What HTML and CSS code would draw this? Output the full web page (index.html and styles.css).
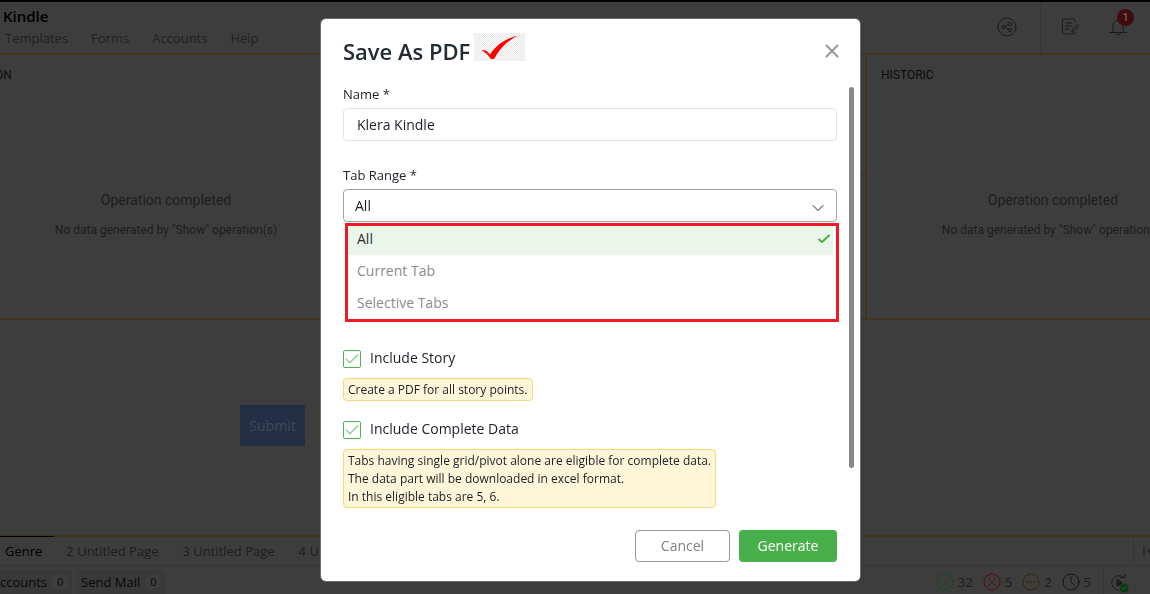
FILE: index.html
```
<!DOCTYPE html>
<html lang="en">
<head>
<meta charset="utf-8">
<title>Kindle</title>
<link rel="stylesheet" href="styles.css">
</head>
<body>
<div class="app">
  <header class="topbar">
    <div class="brand">
      <h1 class="app-name">Kindle</h1>
      <nav class="menu">
        <a href="#">Templates</a><a href="#">Forms</a><a href="#">Accounts</a><a href="#">Help</a>
      </nav>
    </div>
    <div class="tools">
      <button class="tool share" aria-label="Share">
        <svg width="20" height="20" viewBox="0 0 20 20"><circle cx="10" cy="10" r="9"/><circle cx="6.800" cy="10" r="1.700"/><circle cx="12.800" cy="7" r="1.700"/><circle cx="12.800" cy="13" r="1.700"/><path d="M8.400 9.300l2.800-1.500M8.400 10.700l2.800 1.500"/></svg>
      </button>
      <div class="tool-pair">
        <button class="tool" aria-label="Edit notes">
          <svg width="20" height="20" viewBox="0 0 20 20"><path d="M15 5V3.500A1.500 1.500 0 0 0 13.500 2H4A1.500 1.500 0 0 0 2.500 3.500v12A1.500 1.500 0 0 0 4 17h9.500a1.500 1.500 0 0 0 1.500-1.500M5.500 6h6.500M5.500 9h5.500M5.500 12h4"/><path d="M12 14.500l.6-2.300 4.700-4.700 1.600 1.600-4.700 4.700z"/></svg>
        </button>
        <button class="tool bell" aria-label="Notifications">
          <svg width="20" height="20" viewBox="0 0 20 20"><path d="M1.500 15.500h17M4 15.500c.8-1 1-2 1-4V8.500a5 5 0 0 1 10 0v3c0 2 .2 3 1 4M10 3.500V2M7.800 15.700a2.200 2.200 0 0 0 4.400 0"/></svg>
          <span class="badge">1</span>
        </button>
      </div>
    </div>
  </header>

  <main class="board">
    <section class="panel first">
      <h2 class="panel-title">ON</h2>
      <div class="panel-state"><p class="state-head">Operation completed</p><p class="state-sub">No data generated by "Show" operation(s)</p></div>
    </section>
    <div class="middle"><div class="half"></div><div class="half"></div></div>
    <section class="panel">
      <h2 class="panel-title">HISTORIC</h2>
      <div class="panel-state"><p class="state-head">Operation completed</p><p class="state-sub">No data generated by "Show" operation(s)</p></div>
    </section>
  </main>

  <div class="form-area"><button class="submit">Submit</button></div>

  <nav class="tabs">
    <a class="tab active" href="#">Genre</a><a class="tab" href="#">2 Untitled Page</a><a class="tab" href="#">3 Untitled Page</a><a class="tab" href="#">4 Untitled Page</a>
    <button class="tab-first" aria-label="First tab"><svg width="16" height="14" viewBox="0 0 16 14"><path d="M2 2.500v9M10 3L5.500 7l4.500 4M6 7h8"/></svg></button>
  </nav>

  <footer class="status">
    <button class="chip">ccounts<span class="count">0</span></button>
    <button class="chip">Send Mail<span class="count">0</span></button>
    <ul class="results">
      <li class="ok"><svg width="18" height="18" viewBox="0 0 18 18"><circle cx="9" cy="9" r="8"/><path d="M5 9.500l2.800 2.500 5.200-6"/></svg>32</li>
      <li class="bad"><svg width="18" height="18" viewBox="0 0 18 18"><circle cx="9" cy="9" r="8"/><path d="M5 5l8 8M13 5l-8 8"/></svg>5</li>
      <li class="wait"><svg width="18" height="18" viewBox="0 0 18 18"><circle cx="9" cy="9" r="8"/><path class="dots" d="M5.500 9h.01M9 9h.01M12.500 9h.01"/></svg>2</li>
      <li class="time"><svg width="18" height="18" viewBox="0 0 18 18"><circle cx="9" cy="9" r="8"/><path d="M9 4v5l3.500 3.500"/></svg>5</li>
    </ul>
    <button class="rerun" aria-label="Run again">
      <svg width="20" height="20" viewBox="0 0 20 20"><path d="M13 3.500A7.500 7.500 0 1 0 9 17.500M10.500 4.500h4.500V1"/><path class="solid" d="M7 6.500v7l5-3.500z"/><circle class="dot" cx="14" cy="15" r="4.500"/><path class="tick" d="M12 15.300l1.500 1.200 2.500-2.700"/></svg>
    </button>
  </footer>
</div>

<div class="overlay">
  <form class="modal" role="dialog" aria-labelledby="dialog-title">
    <div class="modal-head">
      <h2 id="dialog-title" class="modal-title">Save As PDF</h2>
      <span class="mark"><svg width="51" height="28" viewBox="0 0 51 28"><path fill="#f00" stroke="none" d="M7.500 17.500C11 16.500 13.500 18 16 21.500C22 12.500 31 5.500 44 2.500C33 8 25.500 15.500 20.500 25.500Q18.500 26.500 16.500 25.500C14 22 11.500 19 7.500 17.500z"/></svg></span>
      <button type="button" class="close" aria-label="Close"><svg width="14" height="14" viewBox="0 0 14 14"><path d="M1.500 1.500l11 11M12.500 1.500l-11 11"/></svg></button>
    </div>
    <div class="modal-body">
      <div class="field">
        <label class="label" for="pdf-name">Name *</label>
        <input id="pdf-name" class="control name-input" type="text" value="Klera Kindle">
      </div>
      <div class="field range">
        <label class="label" for="tab-range">Tab Range *</label>
        <div class="select-wrap">
          <select id="tab-range" class="control range-select"><option>All</option><option>Current Tab</option><option>Selective Tabs</option></select>
          <svg class="chevron" width="12" height="8" viewBox="0 0 12 8"><path d="M1 1.500l5 5 5-5"/></svg>
          <ul class="options">
            <li class="option chosen">All<svg width="12" height="10" viewBox="0 0 12 10"><path d="M1 5.500l3 2.500 7-6.500"/></svg></li>
            <li class="option">Current Tab</li>
            <li class="option">Selective Tabs</li>
          </ul>
        </div>
      </div>
      <div class="choice">
        <label class="check"><input type="checkbox" checked>Include Story</label>
        <p class="note">Create a PDF for all story points.</p>
      </div>
      <div class="choice">
        <label class="check"><input type="checkbox" checked>Include Complete Data</label>
        <p class="note">Tabs having single grid/pivot alone are eligible for complete data.<br>The data part will be downloaded in excel format.<br>In this eligible tabs are 5, 6.</p>
      </div>
      <div class="scroll-thumb"></div>
    </div>
    <div class="modal-foot">
      <button type="button" class="btn cancel">Cancel</button>
      <button type="submit" class="btn generate">Generate</button>
    </div>
  </form>
</div>
</body>
</html>
```
FILE: styles.css
```
* { box-sizing: border-box; }
body, h1, h2, p, ul { margin: 0; padding: 0; }
ul { list-style: none; }
a { color: inherit; text-decoration: none; }
button { font: inherit; color: inherit; background: none; border: 0; padding: 0; }
svg { display: block; fill: none; stroke: currentColor; stroke-linecap: round; stroke-linejoin: round; }
body { font-family: "Open Sans", "Noto Sans", sans-serif; font-size: 13px; color: #1e1e1e; overflow: hidden; }

.app { display: flex; flex-direction: column; height: 100vh; background: #3d3d3d; border-top: 2px solid #000; overflow: hidden; }
.topbar { display: flex; justify-content: space-between; height: 51px; flex: none; }
.brand { padding: 4px 0 0 3px; }
.app-name { font-size: 15px; line-height: 21px; font-weight: 600; color: #000; }
.menu { display: flex; gap: 23px; padding-left: 2px; line-height: 22px; color: #222; }
.tools { display: flex; align-items: stretch; color: #1c1c1c; }
.tool { position: relative; display: block; }
.share { padding: 0 23px 2px; }
.tool-pair { display: flex; align-items: center; gap: 28px; padding: 0 22px 2px 19px; border-left: 1px solid #363636; }
.badge { position: absolute; left: 9px; top: -8px; width: 17px; height: 17px; border-radius: 50%; background: #3f0b0d; color: #777; font: 11px/17px Roboto, sans-serif; text-align: center; }

.board { display: grid; grid-template-columns: 332px 1fr 374px; width: calc(100% + 89px); height: 267px; flex: none; border: solid #40361f; border-width: 2px 0; }
.panel { font-family: Roboto, sans-serif; padding: 12px 14px; border-left: 2px solid #40361f; }
.panel.first { border-left: 0; padding-left: 0; }
.panel-title { font-size: 12px; line-height: 16px; font-weight: 400; color: #0c0c0c; }
.first .panel-title { margin-left: -5px; }
.panel-state { padding-top: 107px; text-align: center; }
.state-head { font-size: 14px; line-height: 20px; }
.state-sub { font-size: 12px; line-height: 20px; padding-top: 10px; }
.panel.first .panel-title + .panel-state { padding-left: 14px; }
.middle { display: grid; grid-template-rows: 118px 1fr; }
.half + .half { border-top: 2px solid #40361f; }
.form-area { flex: 1; padding: 85px 0 0 240px; }
.submit { width: 65px; height: 41px; background: #222f45; color: #3f4856; font-size: 14px; }

.tabs { display: flex; height: 31px; flex: none; border-top: 2px solid #40361f; border-bottom: 1px solid #363636; line-height: 29px; color: #1e1e1e; }
.tab { padding: 0 12px; }
.tab.active { padding: 0 12px 0 5px; box-shadow: 0 -1px #000; color: #000; }
.tab-first { margin-left: auto; width: 17px; padding-left: 8px; border-left: 1px solid #363636; overflow: hidden; }
.status { display: flex; height: 28px; flex: none; color: #1c1c1c; }
.chip { display: flex; align-items: center; gap: 5px; margin: 4px 4px 0 0; padding-right: 4px; background: #393939; color: #080808; }
.chip + .chip { padding-left: 5px; }
.count { width: 16px; height: 16px; border-radius: 8px; background: #3e3e3e; font-size: 11px; line-height: 16px; }
.results { display: flex; align-items: center; gap: 10px; margin-left: auto; padding: 3px 12px 0 0; }
.results li { display: flex; align-items: center; gap: 4px; }
.ok svg { color: #164a1a; }
.bad svg { color: #541012; }
.wait svg { color: #362a0a; }
.wait .dots { stroke-width: 2; }
.time svg { color: #14161c; }
.rerun { padding: 6px 20px 0 6px; border-left: 1px solid #363636; }
.rerun .solid { fill: #1c1c1c; }
.rerun .dot { fill: #0e3b12; stroke: none; }
.rerun .tick { stroke: #3d5c40; }

.overlay { position: fixed; inset: 0; display: grid; place-items: center; padding: 5px 0 0 31px; }
.modal { width: 539px; padding: 13px 23px 19px 22px; background: #fff; border-radius: 5px; box-shadow: 0 0 0 1px #6b6b6b; color: #1b1f26; }
.modal-head { display: flex; align-items: center; height: 39px; }
.modal-title { font-size: 22px; line-height: 28px; font-weight: 600; color: #222b36; }
.mark { margin: -8px 0 0 4px; background: repeating-conic-gradient(#eaeaea 0 25%, #f8f8f8 0 50%) 0 0 / 2px 2px; }
.close { margin: 0 -2px 0 auto; color: #999; }
.close svg { stroke-width: 2; }
.modal-body { position: relative; padding: 14px 0 22px; }
.label { display: block; line-height: 18px; margin-bottom: 5px; }
.control { display: block; width: 100%; height: 33px; border: 1px solid #e3e3e3; border-radius: 4px; background: #fff; color: #1b1f26; font: inherit; font-size: 14px; }
.name-input { padding: 0 13px; }
.range { padding-top: 25px; }
.select-wrap { position: relative; }
.range-select { appearance: none; padding: 0 11px; border-color: #a3a3a3; }
.chevron { position: absolute; right: 13px; top: 15px; color: #222; }
.options { position: absolute; top: 34px; left: 2px; right: -2px; border: 3px solid #ed1c24; background: #fff; font-size: 14px; color: #8b8b8b; }
.option { display: flex; align-items: center; justify-content: space-between; height: 32px; padding: 0 7px 0 9px; }
.option.chosen { height: 29px; padding-bottom: 3px; background: #ebf5ea; color: #2b2f33; margin-right: 3px; padding-right: 3px; }
.option svg { color: #47b04b; }
.option path { stroke-width: 2; }
.range + .choice { padding-top: 126px; }
.choice { padding-top: 18px; }
.check { display: flex; align-items: center; gap: 9px; line-height: 20px; font-size: 14px; margin-bottom: 10px; }
.check input { appearance: none; width: 18px; height: 18px; margin: 2px 0 0; border: 1px solid #4db251; border-radius: 2px; display: grid; place-items: center; }
.check input::after { content: ""; width: 5px; height: 11px; border: solid #5cb860; border-width: 0 1px 1px 0; transform: rotate(45deg); margin-top: -3px; }
.note { width: fit-content; padding: 2px 4px 1px; border: 1px solid #f5d87c; border-radius: 4px; background: #fff6da; font-size: 12px; line-height: 18px; }
.scroll-thumb { position: absolute; right: -17px; top: 16px; width: 5px; height: 381px; border-radius: 3px; background: #888; }
.modal-foot { display: flex; justify-content: flex-end; gap: 9px; }
.btn { height: 32px; border-radius: 4px; font-size: 14px; }
.cancel { width: 95px; border: 1px solid #999; color: #808080; }
.generate { width: 98px; background: #47b04b; color: #fff; }
```
